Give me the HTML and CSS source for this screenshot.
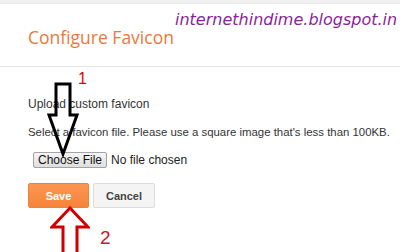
FILE: index.html
```html
<!DOCTYPE html>
<html lang="en">
<head>
    <meta charset="UTF-8">
    <title>Configure Favicon</title>
    <link rel="stylesheet" href="styles.css">
</head>
<body>

    <div class="topbar"></div>

    <div class="dialog">
        <div class="dialog-head">
            <h1>Configure Favicon</h1>
        </div>

        <div class="dialog-body">
            <p class="label">Upload custom favicon</p>
            <p class="hint">Select a favicon file. Please use a square image that's less than 100KB.</p>

            <div class="file-row">
                <span class="file-btn">Choose File</span>
                <span class="file-name">No file chosen</span>
            </div>

            <div class="actions">
                <button class="btn btn-save">Save</button>
                <button class="btn btn-cancel">Cancel</button>
            </div>
        </div>
    </div>

    <!-- annotations drawn over the screenshot -->
    <div class="watermark">internethindime.blogspot.in</div>

    <span class="mark mark-1">1</span>
    <svg class="arrow arrow-down" width="34" height="76" viewBox="0 0 34 76">
        <path d="M10 2 H24 V33 H31 L17 72 L3 33 H10 Z" fill="none" stroke="#000" stroke-width="3" stroke-linejoin="miter"/>
    </svg>

    <span class="mark mark-2">2</span>
    <svg class="arrow arrow-up" width="40" height="46" viewBox="0 0 40 46">
        <path d="M13 48 V21 H2 L20 2 L38 21 H27 V48" fill="none" stroke="#d10000" stroke-width="3" stroke-linejoin="miter"/>
    </svg>

</body>
</html>
```

FILE: styles.css
```css
body {
    margin: 0;
    padding: 0;
    background-color: white;
    font-family: "Liberation Sans", Arial, sans-serif;
    color: #333;
    position: relative;
    height: 252px;
    overflow: hidden;
}
.topbar {
    height: 3px;
    background-color: #f1f1f1;
    border-bottom: 1px solid #e6e6e6;
}
.dialog-head {
    padding: 21px 28px 0;
    height: 41px;
    border-bottom: 1px solid #e5e5e5;
}
h1 {
    margin: 0;
    font-family: "Open Sans", sans-serif;
    font-weight: normal;
    font-size: 17.5px;
    color: #e8793a;
}
.dialog-body {
    padding: 30px 28px 0;
}
.label,
.hint {
    margin: 0;
    font-size: 12px;
    line-height: 14px;
    white-space: nowrap;
}
.hint {
    margin-top: 14px;
    font-size: 11.4px;
}
.file-row {
    margin-top: 13px;
    display: flex;
    align-items: center;
    gap: 4px;
    font-size: 12px;
}
.file-btn {
    margin-left: 5px;
    padding: 0 4px;
    border: 1px solid #a3a3a3;
    border-radius: 2px;
    background: linear-gradient(#f6f6f6, #dedede);
    color: #111;
    line-height: 14px;
}
.file-name {
    color: #222;
}
.actions {
    margin-top: 15px;
    display: flex;
    gap: 4px;
}
.btn {
    width: 62px;
    height: 25px;
    border-radius: 2px;
    font-family: "Liberation Sans", Arial, sans-serif;
    font-size: 11px;
    font-weight: bold;
    cursor: pointer;
}
.btn-save {
    width: 61px;
    background: linear-gradient(#fc9750, #f7843a);
    border: 1px solid #f0813c;
    color: #fff;
}
.btn-cancel {
    background: #f4f4f4;
    border: 1px solid #dcdcdc;
    color: #444;
}
.watermark {
    position: absolute;
    left: 175px;
    top: 10px;
    font-family: "DejaVu Sans", sans-serif;
    font-style: italic;
    font-size: 16px;
    color: #8a1f99;
}
.mark {
    position: absolute;
    font-family: "Liberation Sans", Arial, sans-serif;
}
.mark-1 {
    left: 78px;
    top: 70px;
    font-size: 16px;
    color: #e00000;
}
.mark-2 {
    left: 100px;
    top: 227px;
    font-size: 19px;
    color: #c8162a;
}
.arrow {
    position: absolute;
}
.arrow-down {
    left: 46px;
    top: 82px;
}
.arrow-up {
    left: 50px;
    top: 206px;
}
```
